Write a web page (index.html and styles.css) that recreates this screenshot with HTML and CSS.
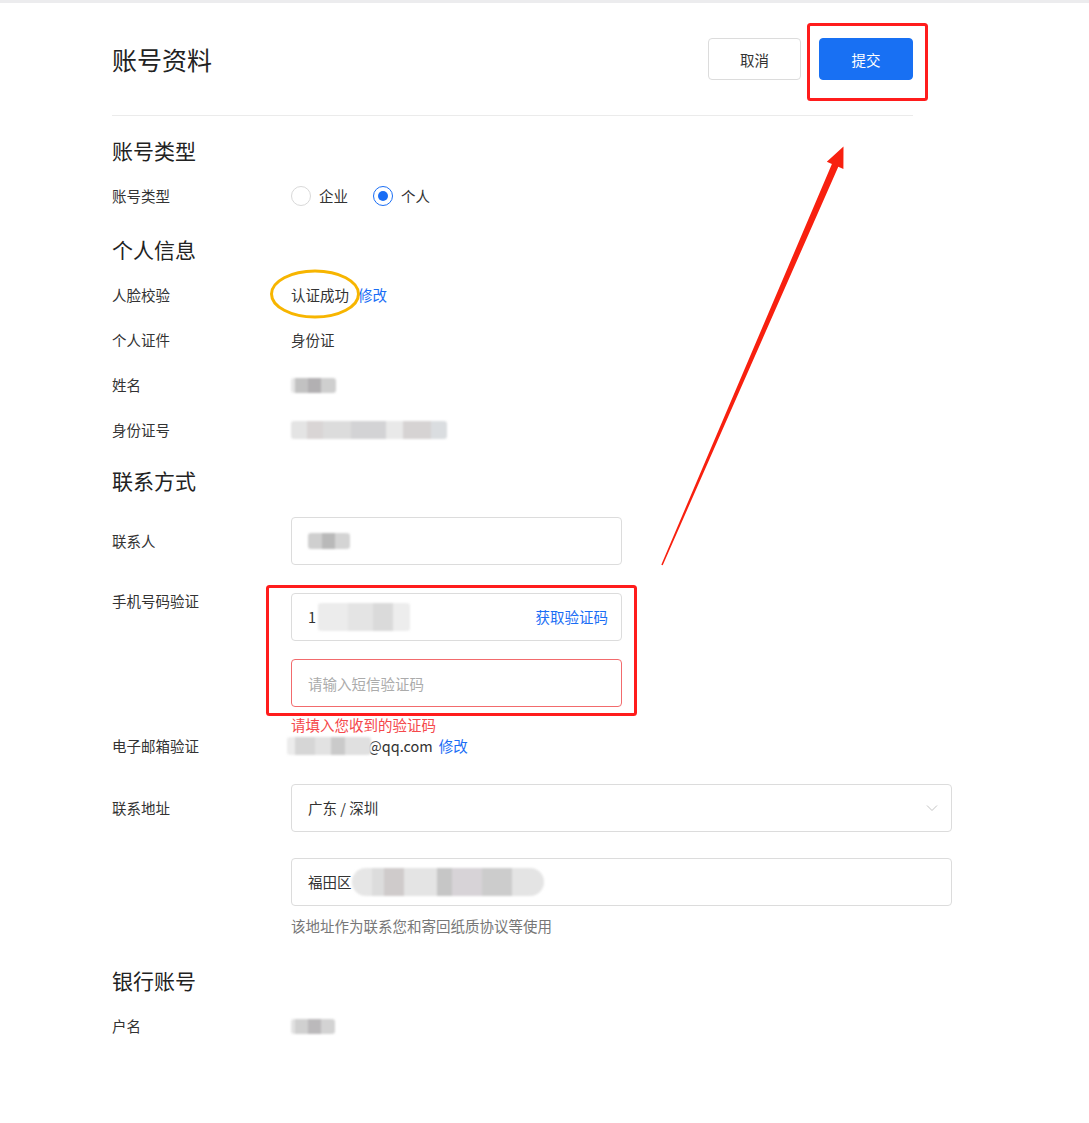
FILE: index.html
```html
<!DOCTYPE html>
<html lang="zh-CN">
<head>
    <meta charset="UTF-8">
    <meta name="viewport" content="width=device-width, initial-scale=1.0">
    <title>账号资料</title>
    <link rel="stylesheet" href="styles.css">
</head>
<body>
    <div class="topline"></div>

    <div class="page">
        <header class="page-head">
            <h1>账号资料</h1>
            <div class="actions">
                <button class="btn">取消</button>
                <button class="btn btn-primary">提交</button>
            </div>
        </header>

        <section class="group">
            <h2>账号类型</h2>
            <div class="field">
                <div class="label">账号类型</div>
                <div class="value radios">
                    <span class="radio"><i class="dot"></i>企业</span>
                    <span class="radio checked"><i class="dot"></i>个人</span>
                </div>
            </div>
        </section>

        <section class="group">
            <h2>个人信息</h2>
            <div class="field">
                <div class="label">人脸校验</div>
                <div class="value">认证成功<a class="link">修改</a></div>
            </div>
            <div class="field">
                <div class="label">个人证件</div>
                <div class="value">身份证</div>
            </div>
            <div class="field">
                <div class="label">姓名</div>
                <div class="value"><span class="blur blur-name"></span></div>
            </div>
            <div class="field">
                <div class="label">身份证号</div>
                <div class="value"><span class="blur blur-id"></span></div>
            </div>
        </section>

        <section class="group tight">
            <h2>联系方式</h2>
            <div class="field field-input field-contact">
                <div class="label">联系人</div>
                <div class="value">
                    <div class="input short"><span class="blur blur-contact"></span></div>
                </div>
            </div>
            <div class="field field-phone">
                <div class="label">手机号码验证</div>
                <div class="value stack">
                    <div class="input short">1<span class="blur blur-phone"></span><a class="link suffix">获取验证码</a></div>
                    <input class="input short error" type="text" placeholder="请输入短信验证码">
                    <div class="error-text">请填入您收到的验证码</div>
                </div>
            </div>
            <div class="field field-email">
                <div class="label">电子邮箱验证</div>
                <div class="value"><span class="blur blur-mail"></span>@qq.com<a class="link near">修改</a></div>
            </div>
            <div class="field field-input field-address">
                <div class="label">联系地址</div>
                <div class="value stack">
                    <div class="input select">广东 / 深圳
                        <svg class="chevron" width="12" height="8" viewBox="0 0 12 8"><path d="M1 1.5 L6 6.5 L11 1.5" fill="none" stroke="#c4c4c4" stroke-width="1"/></svg>
                    </div>
                    <div class="input wide gap">福田区<span class="blur blur-addr"></span></div>
                    <div class="help">该地址作为联系您和寄回纸质协议等使用</div>
                </div>
            </div>
        </section>

        <section class="group">
            <h2>银行账号</h2>
            <div class="field">
                <div class="label">户名</div>
                <div class="value"><span class="blur blur-name short-blur"></span></div>
            </div>
        </section>
    </div>

    <!-- annotation marks drawn over the screenshot -->
    <svg class="marks" width="1089" height="1123" viewBox="0 0 1089 1123">
        <rect x="808.5" y="24.5" width="118" height="75" rx="2" fill="none" stroke="#ff1c1c" stroke-width="3"/>
        <rect x="267.5" y="586.5" width="368" height="128" rx="2" fill="none" stroke="#ff1c1c" stroke-width="3"/>
        <ellipse cx="315" cy="294" rx="43.5" ry="23" fill="none" stroke="#f7b500" stroke-width="3"/>
        <polygon points="661.3,564.7 831.9,164 826.8,161.8 843.5,146.5 843.4,169 838.3,166.8 662.7,565.3" fill="#f8200f"/>
    </svg>
</body>
</html>
```

FILE: styles.css
```css
* {
    margin: 0;
    padding: 0;
    box-sizing: border-box;
}

body {
    background: #fff;
    font-family: "Noto Sans CJK SC", "Microsoft YaHei", sans-serif;
    font-size: 14.5px;
    color: #333;
    position: relative;
    width: 1089px;
    min-height: 1123px;
}

.topline {
    height: 3px;
    background: #ececee;
}

.page {
    margin-left: 112px;
    width: 840px;
}

/* header */
.page-head {
    width: 801px;
    display: flex;
    justify-content: space-between;
    align-items: center;
    padding: 35px 0;
    border-bottom: 1px solid #ebebeb;
}

.page-head h1 {
    font-size: 25px;
    font-weight: normal;
    color: #222;
}

.actions {
    display: flex;
    gap: 18px;
}

.btn {
    width: 93px;
    height: 42px;
    border: 1px solid #dcdcdc;
    border-radius: 4px;
    background: #fff;
    font-family: inherit;
    font-size: 14.5px;
    color: #333;
}

.btn-primary {
    width: 94px;
    background: #1870f3;
    border-color: #1870f3;
    color: #fff;
}

/* sections */
.group:first-of-type {
    padding-top: 15px;
}

.group h2 {
    font-size: 21px;
    font-weight: normal;
    color: #222;
    line-height: 28px;
    padding-top: 5px;
    margin-bottom: 21px;
}

.group.tight h2 {
    padding-top: 2px;
    margin-bottom: 23px;
}

.field {
    display: flex;
    line-height: 22px;
    margin-bottom: 23px;
}

.label {
    width: 179px;
    flex-shrink: 0;
    color: #333;
}

.value {
    display: flex;
    align-items: center;
    color: #333;
}

.link {
    color: #1a6ef5;
    margin-left: 9px;
}

.link.near {
    margin-left: 6px;
}

/* radios */
.radios {
    gap: 25px;
}

.radio {
    display: flex;
    align-items: center;
    gap: 8px;
}

.radio .dot {
    width: 20px;
    height: 20px;
    border: 1px solid #d9d9d9;
    border-radius: 50%;
    position: relative;
}

.radio.checked .dot {
    border-color: #1a6ef5;
}

.radio.checked .dot::after {
    content: "";
    position: absolute;
    left: 4px;
    top: 4px;
    width: 10px;
    height: 10px;
    border-radius: 50%;
    background: #1a6ef5;
}

/* inputs */
.field-input .label {
    line-height: 48px;
}

.field-contact {
    margin-bottom: 25px;
}

.stack {
    flex-direction: column;
    align-items: flex-start;
}

.input {
    display: flex;
    align-items: center;
    height: 48px;
    padding: 0 16px;
    border: 1px solid #dcdcdc;
    border-radius: 4px;
    background: #fff;
    font-family: inherit;
    font-size: 14.5px;
    color: #333;
}

.input.short {
    width: 331px;
}

.input.wide,
.input.select {
    width: 661px;
}

.input.select {
    justify-content: space-between;
}

.chevron {
    margin-right: -3px;
}

.input.error {
    margin-top: 18px;
    border-color: #f26b6d;
    outline: none;
}

.input::placeholder {
    color: #ababab;
}

.suffix {
    margin-left: auto;
    margin-right: -3px;
}

.field-phone {
    margin-bottom: 0;
}

.field-phone .stack {
    padding-top: 3px;
}

.error-text {
    margin-top: 8px;
    line-height: 20px;
    color: #f5484b;
}

.field-email {
    margin-bottom: 27px;
}

.input.gap {
    margin-top: 26px;
}

.help {
    margin-top: 10px;
    line-height: 20px;
    color: #777;
}

.field-address {
    margin-bottom: 25px;
}

/* masked values */
.blur {
    display: inline-block;
    height: 15px;
    border-radius: 3px;
    filter: blur(0.8px);
}

.blur-name {
    width: 45px;
    background: linear-gradient(90deg, #e6e6e6 0 4px, #c2c2c2 4px 17px, #b2b0b2 17px 30px, #cfcfcf 30px);
}

.short-blur {
    width: 44px;
    background: linear-gradient(90deg, #e2e2e2 0 4px, #d0d0d0 4px 17px, #bbb9bb 17px 30px, #d3d3d3 30px);
}

.blur-id {
    width: 156px;
    height: 18px;
    background: linear-gradient(90deg, #e4e4e4 0 16px, #d9d5d5 16px 32px, #dcdcdc 32px 60px, #d3d3d5 60px 95px, #e9e9e9 95px 112px, #d6d3d3 112px 140px, #dadde0 140px);
}

.blur-contact {
    width: 42px;
    height: 16px;
    background: linear-gradient(90deg, #cfcfcf 0 14px, #b9b9b9 14px 27px, #d4d4d4 27px);
}

.blur-phone {
    width: 92px;
    height: 28px;
    margin-left: 2px;
    background: linear-gradient(90deg, #ececec 0 30px, #e4e4e4 30px 55px, #dadada 55px 75px, #ededed 75px);
}

.blur-mail {
    width: 84px;
    height: 18px;
    margin-left: -4px;
    margin-right: -3px;
    position: relative;
    background: linear-gradient(90deg, #ececec 0 8px, #d6d6d6 8px 28px, #e2e2e2 28px 44px, #cacaca 44px 58px, #e0e0e0 58px);
}

.blur-addr {
    width: 192px;
    height: 28px;
    border-radius: 14px;
    background: linear-gradient(90deg, #e6e6e6 0 20px, #dcdcdc 20px 32px, #cfcbcb 32px 52px, #e4e4e4 52px 85px, #c6c6c6 85px 100px, #d7d3d7 100px 130px, #cccccc 130px 160px, #e4e4e4 160px);
}

/* annotations */
.marks {
    position: absolute;
    top: 0;
    left: 0;
    pointer-events: none;
}
```
